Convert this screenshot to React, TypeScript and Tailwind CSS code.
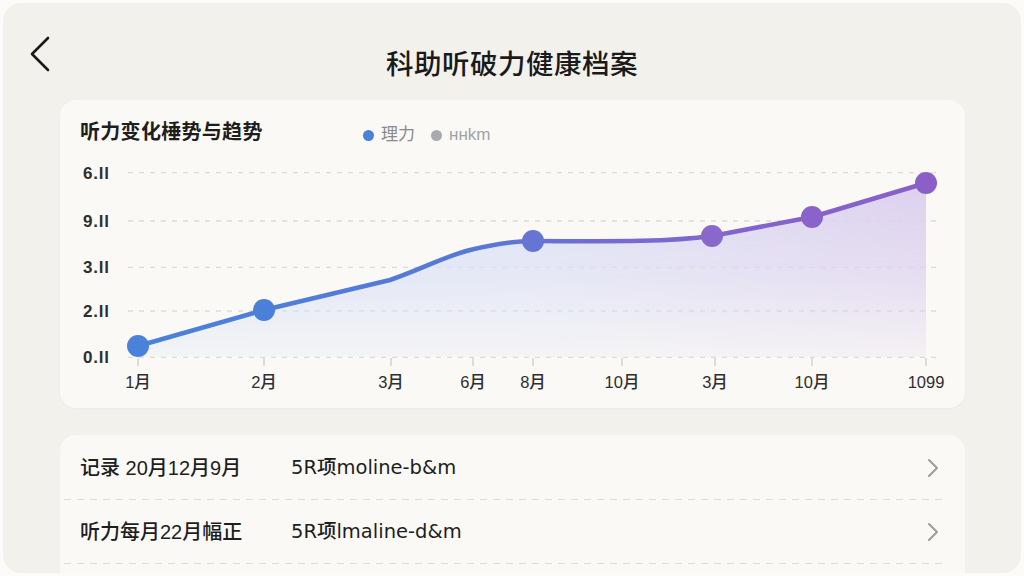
import React from "react";

const FONT = { fontFamily: '"Liberation Sans","Noto Sans CJK SC",sans-serif' };
const WIDE = { fontFamily: '"DejaVu Sans","Noto Sans CJK SC",sans-serif' };

const xs = [
  { x: 78, l: "1月" },
  { x: 204, l: "2月" },
  { x: 331, l: "3月" },
  { x: 413, l: "6月" },
  { x: 473, l: "8月" },
  { x: 562, l: "10月" },
  { x: 655, l: "3月" },
  { x: 752, l: "10月" },
  { x: 866, l: "1099" },
];

const ys = [
  { y: 22.7, l: "6.ll" },
  { y: 71, l: "9.ll" },
  { y: 117.3, l: "3.ll" },
  { y: 161, l: "2.ll" },
  { y: 207.3, l: "0.ll" },
];

const pts = [
  { x: 78, y: 196, c: "#4a82d9" },
  { x: 204, y: 160, c: "#4a80d8" },
  { x: 473, y: 91, c: "#6674d4" },
  { x: 652, y: 86, c: "#8967cb" },
  { x: 752, y: 67, c: "#8963c9" },
  { x: 866, y: 33, c: "#8a60c8" },
];

const LINE =
  "M78 196 L204 160 L330 130 C365 118 380 108 410 100 C440 93 455 91 473 91 C530 91 600 93 652 86 L752 67 L866 33";

function Chart() {
  return (
    <svg width={905} height={258} viewBox="0 0 905 258" className="block">
      <defs>
        <linearGradient id="ln" x1="78" x2="866" y1="0" y2="0" gradientUnits="userSpaceOnUse">
          <stop offset="0" stopColor="#4a82d9" />
          <stop offset="0.42" stopColor="#5579d6" />
          <stop offset="0.62" stopColor="#7a69cf" />
          <stop offset="1" stopColor="#8a5fc8" />
        </linearGradient>
        <linearGradient id="ar" x1="78" x2="866" y1="0" y2="0" gradientUnits="userSpaceOnUse">
          <stop offset="0" stopColor="#d6e0f6" />
          <stop offset="0.5" stopColor="#dbe0f5" />
          <stop offset="1" stopColor="#dccfee" />
        </linearGradient>
        <linearGradient id="fade" x1="0" x2="0" y1="30" y2="210" gradientUnits="userSpaceOnUse">
          <stop offset="0" stopColor="#fff" stopOpacity="1" />
          <stop offset="0.55" stopColor="#fff" stopOpacity="0.65" />
          <stop offset="1" stopColor="#fff" stopOpacity="0.15" />
        </linearGradient>
        <mask id="m">
          <rect x="0" y="0" width="905" height="258" fill="url(#fade)" />
        </mask>
      </defs>
      {ys.map((g) => (
        <g key={g.l}>
          <line x1={68} x2={880} y1={g.y} y2={g.y} stroke="#dedcd8" strokeWidth={1.3} strokeDasharray="5 6" />
          <text x={23} y={g.y + 6} fontSize={17} fill="#2e2e2e" fontWeight={700} letterSpacing={0.8} style={FONT}>
            {g.l}
          </text>
        </g>
      ))}
      <path d={LINE + " L866 207 L78 207 Z"} fill="url(#ar)" mask="url(#m)" />
      {xs.map((t, i) => (
        <g key={i}>
          <line x1={t.x} x2={t.x} y1={208} y2={216} stroke="#cfcdc9" strokeWidth={1.3} />
          <text x={t.x} y={238} fontSize={16.5} fill="#2e2e2e" fontWeight={500} textAnchor="middle" style={FONT}>
            {t.l}
          </text>
        </g>
      ))}
      <path d={LINE} fill="none" stroke="url(#ln)" strokeWidth={4.5} strokeLinecap="round" strokeLinejoin="round" />
      {pts.map((p, i) => (
        <circle key={i} cx={p.x} cy={p.y} r={11} fill={p.c} />
      ))}
    </svg>
  );
}

function Chevron() {
  return (
    <svg width={14} height={20} viewBox="0 0 14 20">
      <polyline points="3,2 11,10 3,18" fill="none" stroke="#9b9b9b" strokeWidth={2} strokeLinecap="round" strokeLinejoin="round" />
    </svg>
  );
}

function Row({ a, b }: { a: string; b: string }) {
  return (
    <div>
      <div className="flex h-[63px] items-center pl-[20px] pr-[25px] text-[20px] font-medium text-[#1e1e1e]">
        <div className="w-[211px]">{a}</div>
        <div className="flex-1 text-[19.5px]" style={WIDE}>
          {b}
        </div>
        <Chevron />
      </div>
      <div className="ml-[4px] mr-[20px] h-px bg-[repeating-linear-gradient(90deg,#dfdcd7_0_7px,transparent_7px_13px)]" />
    </div>
  );
}

export default function App() {
  return (
    <div className="h-[576px] w-[1024px] bg-[#fcfbf9] p-[3px]" style={FONT}>
      <div className="flex h-full flex-col overflow-hidden rounded-[18px] bg-[#f3f1ec]">
        <div className="grid h-[97px] shrink-0 grid-cols-[1fr_auto_1fr]">
          <div className="pl-[26px] pt-[33px]">
            <svg width={24} height={36} viewBox="0 0 24 36">
              <polyline points="19,2 3,18 19,34" fill="none" stroke="#1a1a1a" strokeWidth={2.6} strokeLinecap="round" strokeLinejoin="round" />
            </svg>
          </div>
          <div className="pt-[45px] text-[27.5px] font-medium leading-[34px] tracking-[0.5px] text-[#1a1a1a]">
            科助听破力健康档案
          </div>
          <div />
        </div>
        <div className="ml-[57px] w-[905px] shrink-0">
          <div className="h-[308px] rounded-[16px] bg-[#faf9f6] shadow-[0_1px_2px_rgba(0,0,0,0.03)]">
            <div className="flex h-[50px] pl-[20px] pt-[20px]">
              <div className="w-[283px] text-[20px] font-semibold leading-[24px] tracking-[0.3px] text-[#1e1e1e]">听力变化棰势与趋势</div>
              <div className="flex items-center gap-[7px] text-[17px] leading-[24px]">
                <span className="h-[11px] w-[11px] rounded-full bg-[#4a82d9]" />
                <span className="text-[#8a8a8a]">理力</span>
                <span className="ml-[9px] h-[11px] w-[11px] rounded-full bg-[#a9a9b0]" />
                <span className="text-[#a3a3a3]">ннkm</span>
              </div>
            </div>
            <Chart />
          </div>
          <div className="mt-[27px] h-[200px] rounded-[16px] bg-[#faf9f6] pt-[1px]">
            <Row a="记录 20月12月9月" b="5R项moline-b&m" />
            <Row a="听力每月22月幅正" b="5R项lmaline-d&m" />
          </div>
        </div>
      </div>
    </div>
  );
}
